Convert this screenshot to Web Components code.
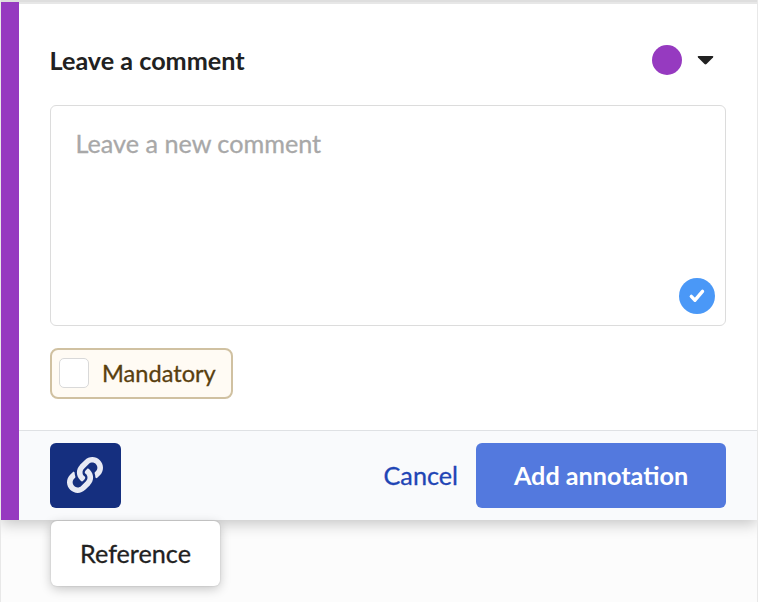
<!DOCTYPE html>
<html lang="en">
<head>
<meta charset="utf-8">
<title>Leave a comment</title>
<style>
html,body{margin:0;height:100%;overflow:hidden}
body{background:#fcfcfc;font-family:Lato,"Liberation Sans",sans-serif;color:#212121;-webkit-text-stroke:.3px}
</style>
</head>
<body>
<comment-panel></comment-panel>
<script>
const define = (name, html) => customElements.define(name, class extends HTMLElement {
  constructor() {
    super();
    const t = document.createElement('template');
    t.innerHTML = '<style>*{box-sizing:border-box}:host{box-sizing:border-box}</style>' + html;
    this.attachShadow({ mode: 'open' }).append(t.content.cloneNode(true));
  }
});

define('color-picker', `
<style>
:host{display:flex;align-items:center;gap:15px;margin-right:12px}
i{width:30px;height:30px;border-radius:50%;background:#963ac0}
svg{display:block}
</style>
<i></i><svg width="17" height="9" viewBox="0 0 17 9"><path d="M1.500 0h14Q17 .3 16 1.500L9.500 8.100Q8.500 9 7.500 8.100L1 1.500Q0 .3 1.500 0z" fill="#212121"/></svg>`);

define('comment-box', `
<style>
:host{display:flex;flex-direction:column;justify-content:space-between;height:221px;border:1px solid #dcdcdc;border-radius:6px;padding:21px 10px 11px 24.500px;font-size:25.200px;line-height:32px;color:#a8a8a8;background:#fff}
svg{align-self:flex-end;display:block;margin-bottom:0}
</style>
<span><slot></slot></span>
<svg width="36" height="36" viewBox="0 0 36 36"><circle cx="18" cy="18" r="18" fill="#4a98f7"/><path d="M12.300 18.400L16 22.200L23.500 13.300" fill="none" stroke="#fff" stroke-width="3.400" stroke-linecap="round" stroke-linejoin="round"/></svg>`);

define('check-chip', `
<style>
:host{display:flex;align-items:center;width:183px;height:51px;border:2px solid #d0c1a1;border-radius:8px;background:#fffbf4;padding:0 7px;gap:13px;color:#59400f;font-size:23.600px;line-height:30px}
i{width:30px;height:30px;border:1px solid #d9d9d9;border-radius:5px;background:#fff;margin-top:-1px}
span{margin-top:-2px}
</style>
<i></i><span><slot></slot></span>`);

define('link-button', `
<style>
:host{display:grid;place-items:center;width:71px;height:65px;border-radius:6px;background:#152f7f}
svg{display:block;margin:-2px 1px 0 0}
</style>
<svg width="36" height="36" viewBox="0 0 512 512" fill="#e8eaf4"><path d="M326.612 185.391c59.747 59.809 58.927 155.698.36 214.59-.11.12-.24.25-.36.37l-67.2 67.2c-59.27 59.27-155.699 59.262-214.96 0-59.27-59.26-59.27-155.7 0-214.96l37.106-37.106c9.84-9.84 26.786-3.3 27.294 10.606.648 17.722 3.826 35.527 9.69 52.721 1.986 5.822.567 12.262-3.783 16.612l-13.087 13.087c-28.026 28.026-28.905 73.66-1.155 101.96 28.024 28.579 74.086 28.749 102.325.51l67.2-67.19c28.191-28.191 28.073-73.757 0-101.83-3.701-3.694-7.429-6.564-10.341-8.569a16.037 16.037 0 0 1-6.947-12.606c-.396-10.567 3.348-21.456 11.698-29.806l21.054-21.055c5.521-5.521 14.182-6.199 20.584-1.731a152.482 152.482 0 0 1 20.522 17.197zM467.547 44.449c-59.261-59.262-155.69-59.27-214.96 0l-67.2 67.2c-.12.12-.25.25-.36.37-58.566 58.892-59.387 154.781.36 214.59a152.454 152.454 0 0 0 20.521 17.196c6.402 4.468 15.064 3.789 20.584-1.731l21.054-21.055c8.35-8.35 12.094-19.239 11.698-29.806a16.037 16.037 0 0 0-6.947-12.606c-2.912-2.005-6.64-4.875-10.341-8.569-28.073-28.073-28.191-73.639 0-101.83l67.2-67.19c28.239-28.239 74.3-28.069 102.325.51 27.75 28.3 26.872 73.934-1.155 101.96l-13.087 13.087c-4.35 4.35-5.769 10.79-3.783 16.612 5.864 17.194 9.042 34.999 9.69 52.721.509 13.906 17.454 20.446 27.294 10.606l37.106-37.106c59.271-59.259 59.271-155.699.001-214.959z"/></svg>`);

define('action-button', `
<style>
:host{display:grid;place-items:center;height:65px;padding-bottom:2px;font-size:25.200px;line-height:32px;color:#1f45b5;border-radius:6px}
:host([primary]){width:250px;background:#5379de;color:#fff;font-weight:700;-webkit-text-stroke:0}
</style>
<span><slot></slot></span>`);

define('tool-tip', `
<style>
:host{display:grid;place-items:center;width:169px;height:65px;padding-bottom:2px;border-radius:6px;background:#fff;box-shadow:0 0 1px 1px rgba(0,0,0,.05),0 3px 11px rgba(0,0,0,.22);font-size:25.200px;line-height:32px;color:#212121}
</style>
<span><slot></slot></span>`);

define('comment-panel', `
<style>
:host{display:block;height:602px;border-left:1px solid #e8e8e8;border-right:1px solid #e8e8e8;background:#fcfcfc;overflow:hidden}
.top{position:relative;z-index:1;height:2px;background:#dedede;margin:0 -1px}
.card{position:relative;height:518px;border-left:18px solid #963ac0;background:#fff;background-clip:padding-box;box-shadow:0 4px 14px rgba(0,0,0,.22);display:flex;flex-direction:column}
.rule{height:2px;background:#e7e7e7}
.body{height:426px;padding:38px 31px 0;display:flex;flex-direction:column}
header{display:flex;justify-content:space-between;align-items:center;height:36px;margin-bottom:27px}
h1{margin:0 0 0 -.5px;font-size:25.200px;line-height:34px;font-weight:700;-webkit-text-stroke:0}
check-chip{margin-top:22px}
footer{height:90px;border-top:1px solid #dfe1e4;background:#f9fafc;padding:12px 31px;display:flex;align-items:flex-start}
.cancel{margin-left:auto;margin-right:18px}
.anchor{position:relative}
tool-tip{position:absolute;left:1px;top:78px}
</style>
<div class="top"></div>
<section class="card">
<div class="rule"></div>
<div class="body">
<header><h1>Leave a comment</h1><color-picker></color-picker></header>
<comment-box>Leave a new comment</comment-box>
<check-chip>Mandatory</check-chip>
</div>
<footer><div class="anchor"><link-button></link-button><tool-tip>Reference</tool-tip></div>
<action-button class="cancel">Cancel</action-button><action-button primary>Add annotation</action-button></footer>
</section>`);
</script>
</body>
</html>
